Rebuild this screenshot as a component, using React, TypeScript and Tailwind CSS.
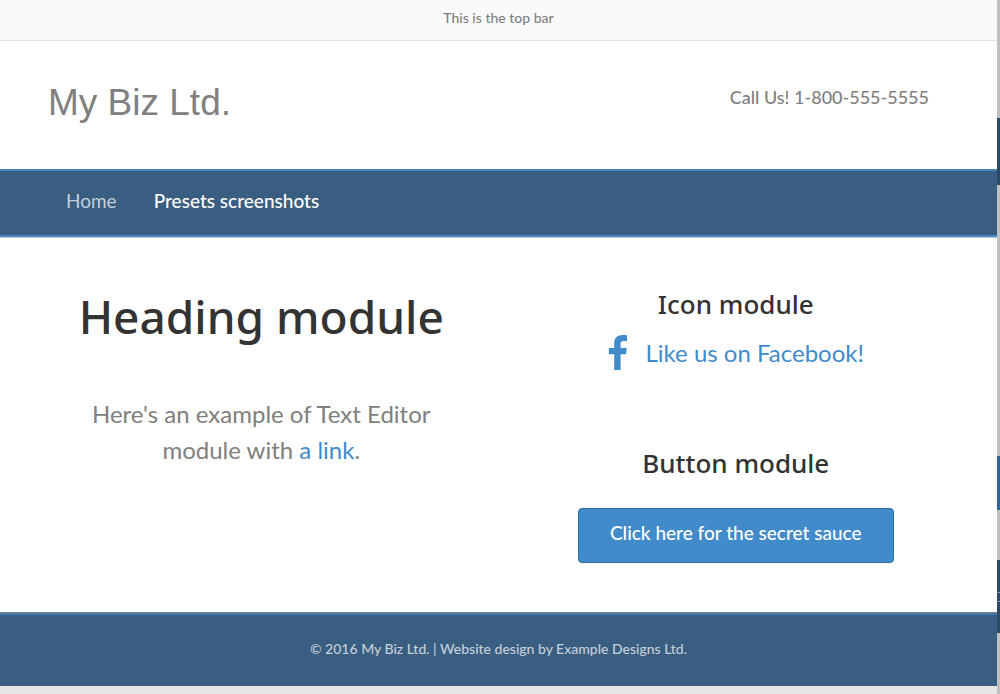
import { FaFacebookF } from "react-icons/fa";

const edge = [
  "h-[118px] bg-[#c0c0c0]",
  "h-[67px] bg-[#2b4a67]",
  "h-[271px] bg-[#c0c0c0]",
  "h-[54px] bg-[#2f6699]",
  "h-[50px] bg-[#c0c0c0]",
  "h-8 bg-[#2b4a67]",
  "h-px bg-[#8a9aa8]",
  "h-2 bg-[#2b4a67]",
  "h-px bg-[#8a9aa8]",
  "h-[31px] bg-[#2b4a67]",
  "flex-1 bg-[#c0c0c0]",
];

const heading = "font-['Noto_Sans',sans-serif] font-medium text-[#333333]";

export default function App() {
  return (
    <div className="flex min-h-screen bg-[#e6e6e6] font-['Lato','Noto_Sans',sans-serif] text-[#808080]">
      <div className="flex min-w-0 flex-1 flex-col">
        <div className="border-b border-[#dfdfdf] bg-[#fafafa] pt-1.5 pb-2.5 text-center text-sm leading-6 font-medium">
          <p>This is the top bar</p>
        </div>

        <header className="flex flex-wrap items-start justify-between gap-4 bg-white px-12 pt-[38px] pb-[42px]">
          <a href="#" className="font-['Liberation_Sans',sans-serif] text-[37px] leading-[48px]">
            My Biz Ltd.
          </a>
          <p className="pt-1 pr-5 text-lg leading-7 font-medium">Call Us! 1-800-555-5555</p>
        </header>

        <nav className="flex h-[68px] items-center gap-[37px] border-y-2 border-t-[#4886ba] border-b-[#428bca] bg-[#395e82] px-[66px] pb-1 text-[19px]">
          <a href="#" className="text-[#c4cfda]">Home</a>
          <a href="#" className="font-medium text-white">Presets screenshots</a>
        </nav>

        <main className="grid grid-cols-1 gap-y-10 border-t border-[#c4c4c4] bg-white px-6 pt-12 pb-[49px] text-center md:grid-cols-2">
          <section className="flex flex-col items-center gap-[50px]">
            <h1 className={`${heading} text-[46px] leading-[60px]`}>Heading module</h1>
            <p className="max-w-[360px] text-2xl leading-9">
              Here's an example of Text Editor module with{" "}
              <a href="#" className="text-[#428bca]">a link</a>.
            </p>
          </section>
          <section className="flex flex-col items-center">
            <h2 className={`${heading} text-[26px] leading-9`}>Icon module</h2>
            <a href="#" className="mt-[13px] flex items-center gap-[18px] text-2xl leading-9 text-[#428bca]">
              <svg viewBox="0 0 20 36" className="h-9 w-5" fill="currentColor" aria-hidden="true">
                <path d="M19 .3v5.6h-3.3c-2.6 0-3.1 1.3-3.1 3.1v4h6.2l-.8 6.2h-5.4V35H6.200V19.200H.8V13h5.400V8.400C6.200 3 9.500 0 14.300 0c2.300 0 4.200.2 4.700.3z" />
              </svg>
              Like us on Facebook!
            </a>
            <h2 className={`${heading} mt-[74px] text-[26px] leading-9`}>Button module</h2>
            <button type="button" className="mt-[27px] h-[55px] rounded border border-[#2d6ca2] bg-[#428bca] px-[31px] pb-1 text-[19px] font-medium text-white">
              Click here for the secret sauce
            </button>
          </section>
        </main>

        <footer className="border-t border-[#808080] text-center text-sm text-[#c4cfda]">
          <p className="border-t-2 border-[#4179ac] bg-[#395e82] pt-[22px] pb-[25px] leading-6 font-medium">
            © 2016 My Biz Ltd. | Website design by Example Designs Ltd.
          </p>
        </footer>
      </div>

      <div className="flex w-[3px] flex-col" aria-hidden="true">
        {edge.map((segment, i) => (
          <span key={i} className={segment} />
        ))}
      </div>
    </div>
  );
}
